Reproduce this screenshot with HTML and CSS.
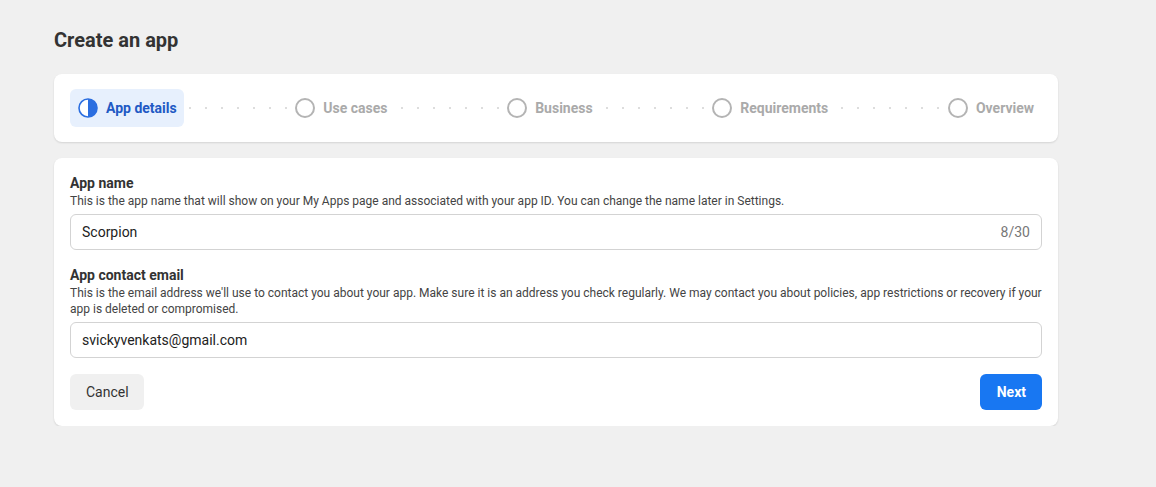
FILE: index.html
```html
<!DOCTYPE html>
<html lang="en">
<head>
<meta charset="utf-8">
<title>Create an app</title>
<link rel="stylesheet" href="styles.css">
</head>
<body>
<main class="page">
  <h1 class="title">Create an app</h1>

  <section class="card stepper">
    <div class="step active">
      <svg class="step-icon" width="20" height="20" viewBox="0 0 20 20">
        <circle cx="10" cy="10" r="9" fill="#fff" stroke="#2b6ee0" stroke-width="1.6"/>
        <path d="M10 1 A9 9 0 0 1 10 19 Z" fill="#2b6ee0"/>
      </svg>
      <span>App details</span>
    </div>
    <div class="connector"></div>
    <div class="step">
      <span class="ring"></span><span>Use cases</span>
    </div>
    <div class="connector"></div>
    <div class="step">
      <span class="ring"></span><span>Business</span>
    </div>
    <div class="connector"></div>
    <div class="step">
      <span class="ring"></span><span>Requirements</span>
    </div>
    <div class="connector"></div>
    <div class="step">
      <span class="ring"></span><span>Overview</span>
    </div>
  </section>

  <section class="card form">
    <div class="field">
      <label class="label">App name</label>
      <p class="desc">This is the app name that will show on your My Apps page and associated with your app ID. You can change the name later in Settings.</p>
      <div class="input">
        <span class="value">Scorpion</span>
        <span class="count">8/30</span>
      </div>
    </div>
    <div class="field">
      <label class="label">App contact email</label>
      <p class="desc">This is the email address we'll use to contact you about your app. Make sure it is an address you check regularly. We may contact you about policies, app restrictions or recovery if your app is deleted or compromised.</p>
      <div class="input">
        <span class="value">svickyvenkats@gmail.com</span>
      </div>
    </div>
    <div class="actions">
      <button class="btn btn-secondary">Cancel</button>
      <button class="btn btn-primary">Next</button>
    </div>
  </section>
</main>
</body>
</html>
```

FILE: styles.css
```css
* { box-sizing: border-box; }

html, body {
  margin: 0;
  padding: 0;
  background: #f0f0f0;
  font-family: Roboto, "Liberation Sans", Arial, sans-serif;
  color: #333;
}

.page {
  width: 1004px;
  margin-left: 54px;
  padding-top: 28px;
}

.title {
  margin: 0 0 22px;
  font-size: 20px;
  line-height: 24px;
  font-weight: 700;
  color: #333;
}

.card {
  background: #fff;
  border-radius: 8px;
  box-shadow: 0 1px 2px rgba(0, 0, 0, 0.12);
}

.stepper {
  display: flex;
  align-items: center;
  padding: 15px 16px;
  margin-bottom: 16px;
}

.step {
  display: flex;
  align-items: center;
  gap: 8px;
  height: 38px;
  padding: 0 8px;
  border-radius: 6px;
  font-size: 14px;
  font-weight: 700;
  color: #aaaaaa;
  white-space: nowrap;
}

.step.active {
  background: #e7f0fd;
  color: #2159c4;
  padding-right: 7px;
}

.step-icon { display: block; }

.ring {
  width: 20px;
  height: 20px;
  border-radius: 50%;
  border: 2px solid #b4b4b4;
  flex: none;
}

.connector {
  flex: 1;
  height: 2px;
  background-image: radial-gradient(circle, #dddddd 1px, transparent 1.2px);
  background-size: 16px 2px;
  background-position: -2px 0;
  background-repeat: repeat-x;
}

.form {
  padding: 16px;
}

.field {
  margin-bottom: 16px;
}

.label {
  display: block;
  font-size: 14px;
  line-height: 18px;
  font-weight: 700;
  color: #333;
  margin-bottom: 1px;
}

.desc {
  margin: 0 0 5px;
  font-size: 12px;
  line-height: 16px;
  color: #444;
}

.input {
  display: flex;
  align-items: center;
  justify-content: space-between;
  height: 36px;
  padding: 0 11px;
  border: 1px solid #d3d3d3;
  border-radius: 6px;
  font-size: 14px;
  color: #222;
}

.count {
  color: #777;
  font-size: 14px;
}

.actions {
  display: flex;
  justify-content: space-between;
}

.btn {
  height: 36px;
  border: none;
  border-radius: 6px;
  font-family: inherit;
  font-size: 14px;
  padding: 0 16px;
  cursor: pointer;
}

.btn-secondary {
  background: #f0f0f0;
  color: #333;
  padding: 0 15px 0 16px;
}

.btn-primary {
  background: #1877f2;
  color: #fff;
  font-weight: 700;
  padding: 0 16px 0 17px;
}
```
